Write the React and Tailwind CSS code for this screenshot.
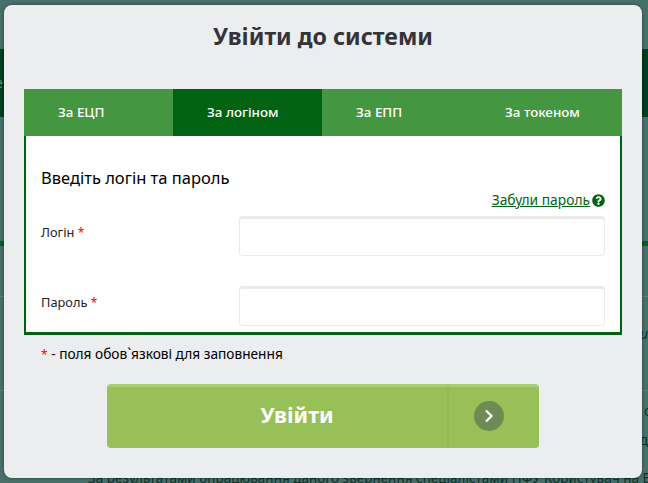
import React from 'react';
import { FaQuestionCircle } from 'react-icons/fa';

const tabs = ['За ЕЦП', 'За логіном', 'За ЕПП', 'За токеном'];

const Field = ({ label, className }) => (
  <div className={`flex items-start ${className}`}>
    <label className="w-[198px] pt-[6px] text-[12.8px] leading-5 text-[#222]">
      {label} <span className="text-xs text-[#f00]">*</span>
    </label>
    <input
      type="text"
      className="h-10 w-[366px] rounded border border-[#eaeaea] border-t-[3px] bg-white"
    />
  </div>
);

const App = () => {
  return (
    <div className="relative h-[483px] w-[648px] overflow-hidden bg-[#47706a] font-['Noto_Sans',sans-serif]">
      {/* page behind the modal */}
      <div className="h-[49px]" />
      <div className="flex h-[68px] items-center bg-[#013d20] text-sm text-[#6f8f86]">
        <span className="-ml-[5px]">е</span>
      </div>
      <div className="h-[124px]" />
      <div className="h-[5px] bg-[#0b5a2a]" />
      <div className="h-[51px] border-b border-[#5d8078]" />
      <div className="h-[94px] border-b border-[#5d8078] pt-[27px] text-right text-sm leading-5 text-[#12302a]">
        <span className="italic">и</span>
      </div>
      <div className="h-[79px] pt-[10px] text-right text-sm leading-5 text-[#12302a]">
        <p className="-mr-[3px]">с</p>
        <p className="mt-[9px]">д</p>
      </div>
      <p className="whitespace-nowrap pl-[88px] text-[13.5px] leading-4 text-[#12302a]">
        За результатами опрацювання даного звернення спеціалістами ПФУ Користувач на Е
      </p>

      {/* modal */}
      <div className="absolute left-1 top-[5px] h-[473px] w-[638px] rounded-lg bg-[#ecedef] px-5 shadow-[0_0_3px_rgba(0,0,0,0.5)]">
        <h1 className="pt-[15px] text-center text-[23.2px] font-bold leading-8 text-[#33333b]">
          Увійти до системи
        </h1>

        <div className="mt-[37px] flex h-[47px]">
          {tabs.map((tab) => (
            <div
              key={tab}
              className={`w-[149px] pl-[34px] text-[13.4px] font-medium leading-[47px] text-white last:grow ${
                tab === 'За логіном' ? 'bg-[#016311]' : 'bg-[#459641]'
              }`}
            >
              {tab}
            </div>
          ))}
        </div>

        <div className="h-[199px] border-2 border-t-0 border-b-[3px] border-[#016311] bg-white px-[15px]">
          <h2 className="pt-[31px] text-[16.5px] leading-[22px] text-black">Введіть логін та пароль</h2>
          <div className="flex items-center justify-end gap-[2px] pt-[2px] text-[13.8px] leading-[18px] text-[#016311]">
            <a className="underline">Забули пароль </a>
            <FaQuestionCircle className="size-[13px]" />
          </div>
          <Field label="Логін" className="mt-[7px]" />
          <Field label="Пароль" className="mt-[30px]" />
        </div>

        <p className="mt-[9px] pl-[17px] text-[13.7px] leading-5 text-black">
          <span className="text-xs text-[#f00]">*</span> - поля обов`язкові для заповнення
        </p>

        <button className="ml-[83px] mt-[20px] flex h-16 w-[432px] items-stretch rounded border-t-[3px] border-[#a9cc75] bg-[#97c158] text-white">
          <span className="flex-1 border-r-2 border-[#8fba52] pl-10 text-center text-[21.6px] font-bold leading-[55px]">
            Увійти
          </span>
          <span className="flex w-[90px] items-center justify-center pb-[3px] pr-[11px]">
            <span className="flex size-[30px] items-center justify-center rounded-full bg-[#6d8b52]">
              <svg width="10" height="14" viewBox="0 0 10 14" fill="none" stroke="#fff" strokeWidth="2.2">
                <path d="M2 1.5 7.5 7 2 12.5" />
              </svg>
            </span>
          </span>
        </button>
      </div>
    </div>
  );
};

export default App;
